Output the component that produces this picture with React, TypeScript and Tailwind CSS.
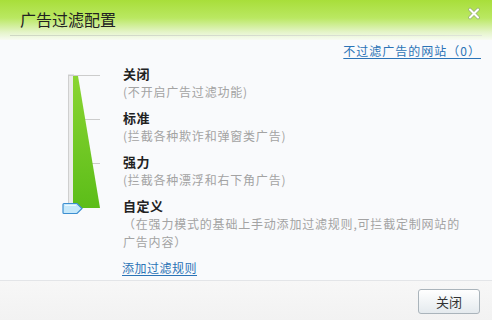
import React from "react";

const font = { fontFamily: '"Noto Sans CJK SC", "Noto Sans", sans-serif' };

const items = [
  { label: "关闭", desc: "(不开启广告过滤功能)" },
  { label: "标准", desc: "(拦截各种欺诈和弹窗类广告)" },
  { label: "强力", desc: "(拦截各种漂浮和右下角广告)" },
  { label: "自定义", desc: "（在强力模式的基础上手动添加过滤规则,可拦截定制网站的广告内容）" },
];

export default function App() {
  return (
    <div className="w-[492px] h-[320px] flex flex-col bg-[#f9fafc] overflow-hidden" style={font}>
      <div className="relative h-[40px] shrink-0 bg-[linear-gradient(180deg,#a8de3a_0%,#bae862_45%,#e4f4c8_80%,#f7fbf2_100%)]">
        <div className="pl-[20px] pt-[8px] text-[16px] leading-[22px] text-[#222]">广告过滤配置</div>
        <div className="absolute left-[10px] right-[10px] top-[35px] h-px bg-[linear-gradient(90deg,#cfd8c4,#d6dccf,#dfe5d8)]" />
        <svg className="absolute left-[467px] top-[7px]" width="14" height="13" viewBox="0 0 14 13">
          <path d="M3 2.5 L11 10.5 M11 2.5 L3 10.5" stroke="#9bb47a" strokeWidth="3.6" strokeLinecap="round" />
          <path d="M3 2.5 L11 10.5 M11 2.5 L3 10.5" stroke="#ffffff" strokeWidth="2" strokeLinecap="round" />
        </svg>
      </div>
      <div className="flex justify-end pr-[11px] h-[22px] items-center">
        <span className="text-[12px] leading-[16px] tracking-[1px] text-[#2b73b6] underline underline-offset-2">不过滤广告的网站（0）</span>
      </div>
      <div className="flex pl-[60px] flex-1 pt-[3px]">
        <svg width="44" height="155" viewBox="0 0 44 155" className="shrink-0">
          <defs>
            <linearGradient id="g" x1="0" y1="0" x2="0" y2="1">
              <stop offset="0" stopColor="#8ad532" />
              <stop offset="1" stopColor="#5cbd19" />
            </linearGradient>
          </defs>
          <rect x="8.5" y="10" width="5" height="134" fill="#ebebeb" stroke="#cfcfcf" strokeWidth="1" />
          <line x1="8" y1="10.5" x2="40" y2="10.5" stroke="#cccccc" />
          <line x1="25" y1="54.5" x2="40" y2="54.5" stroke="#cccccc" />
          <line x1="25" y1="98.5" x2="40" y2="98.5" stroke="#cccccc" />
          <polygon points="13,11 18,11 40,143 13,143" fill="url(#g)" />
          <path d="M4 138.5 L17 138.5 L22 143.5 L17 148.5 L4 148.5 Q3 148.5 3 147.5 L3 139.5 Q3 138.5 4 138.5 Z" fill="#c6e8fa" stroke="#3d8fd1" strokeWidth="1.2" />
          <line x1="5" y1="140.5" x2="16" y2="140.5" stroke="#eaf7ff" />
        </svg>
        <div className="ml-[19px] w-[340px] flex flex-col gap-[8px]">
          {items.map((it) => (
            <div key={it.label} className="flex flex-col">
              <div className="text-[13px] leading-[18px] font-bold tracking-[0.5px] text-[#222]">{it.label}</div>
              <div className="text-[12px] leading-[18px] tracking-[0.8px] text-[#a3a3a3]">{it.desc}</div>
            </div>
          ))}
          <div className="text-[12px] leading-[18px] tracking-[0.5px] text-[#2b73b6] underline underline-offset-2 -ml-px">添加过滤规则</div>
        </div>
      </div>
      <div className="h-[40px] shrink-0 border-t border-[#e3e5e8] bg-[linear-gradient(180deg,#f7f7f7,#f2f2f2)] flex justify-end items-start pt-[8px] pr-[12px]">
        <div className="w-[62px] h-[25px] rounded-[3px] border border-[#aab4bb] bg-[linear-gradient(180deg,#ffffff,#e4eaee)] flex items-center justify-center text-[13px] text-[#333]">
          关闭
        </div>
      </div>
    </div>
  );
}
